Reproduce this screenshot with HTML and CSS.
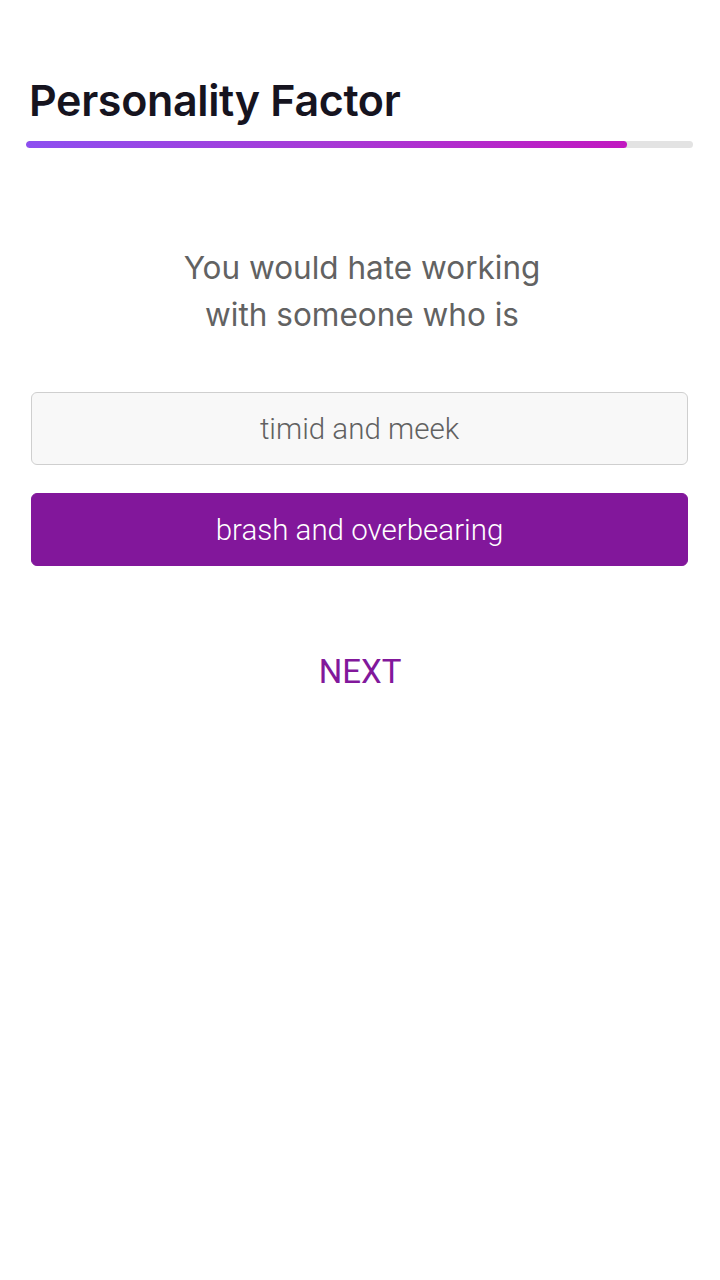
FILE: index.html
```html
<!DOCTYPE html>
<html>
<head>
<meta charset="utf-8">
<link rel="stylesheet" href="styles.css">
</head>
<body>
<div class="page">
  <header class="header">
    <h1 class="title">Personality Factor</h1>
    <div class="progress"><div class="progress-fill" style="width: 90.1%"></div></div>
  </header>
  <p class="question">You would hate working<br>with someone who is</p>
  <div class="options">
    <button class="option">timid and meek</button>
    <button class="option selected">brash and overbearing</button>
  </div>
  <button class="next">NEXT</button>
</div>
</body>
</html>
```
FILE: styles.css
```css
html, body {
  margin: 0;
  padding: 0;
  background: #ffffff;
}
.page {
  width: 720px;
  min-height: 1280px;
  display: flex;
  flex-direction: column;
  box-sizing: border-box;
}
.header {
  padding: 74px 27px 0 26px;
}
.title {
  margin: 0 0 0 3px;
  font-family: Inter, "Noto Sans", sans-serif;
  font-weight: 600;
  font-size: 43px;
  line-height: 52px;
  color: #16141f;
  letter-spacing: -0.35px;
}
.progress {
  margin-top: 15px;
  height: 7px;
  border-radius: 4px;
  background: #e3e3e3;
  overflow: hidden;
}
.progress-fill {
  height: 100%;
  border-radius: 4px;
  background: linear-gradient(90deg, #8d4ff0 0%, #a73ad6 50%, #c118c0 100%);
}
.question {
  margin: 96px 0 0 0;
  text-align: center;
  font-family: Inter, "Noto Sans", sans-serif;
  font-weight: 400;
  font-size: 31.5px;
  line-height: 47px;
  color: #626262;
  padding-left: 4px;
}
.options {
  margin: 54px 32px 0 31px;
  display: flex;
  flex-direction: column;
  gap: 28px;
}
.option {
  height: 73px;
  border: 1px solid #cfcfcf;
  border-radius: 6px;
  background: #f8f8f8;
  font-family: Roboto, "Liberation Sans", sans-serif;
  font-weight: 300;
  font-size: 29.5px;
  color: #616161;
  padding: 0;
  cursor: pointer;
}
.option.selected {
  background: #82179b;
  border-color: #82179b;
  color: #ffffff;
}
.next {
  align-self: center;
  margin-top: 86px;
  border: none;
  background: transparent;
  font-family: Roboto, "Liberation Sans", sans-serif;
  font-weight: 400;
  font-size: 33px;
  line-height: 40px;
  color: #82189b;
  padding: 0;
  cursor: pointer;
}
```
